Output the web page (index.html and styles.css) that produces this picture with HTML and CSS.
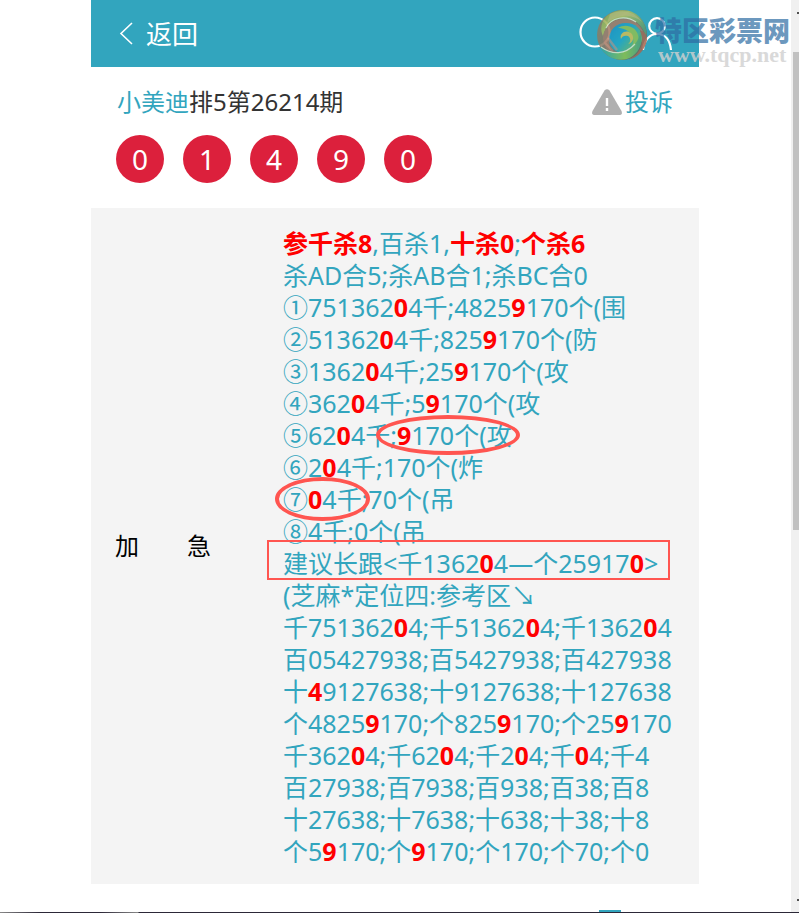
FILE: index.html
```html
<!DOCTYPE html>
<html lang="zh-CN">
<head>
<meta charset="utf-8">
<title>小美迪排5第26214期</title>
<link rel="stylesheet" href="styles.css">
</head>
<body>
<div class="viewport">
  <div class="page">
    <header class="topbar">
      <a class="back" href="#"><svg width="14" height="24" viewBox="0 0 14 24" fill="none" stroke="currentColor" stroke-width="1.6"><path d="M13 1 2 11.500 13 22"/></svg>返回</a>
      <nav class="tools">
        <a href="#" aria-label="搜索"><svg width="40" height="44" viewBox="0 0 40 44" fill="none" stroke="currentColor" stroke-width="2.200"><circle cx="18" cy="20" r="14.500"/><path d="M28 31l8 8"/></svg></a>
        <a href="#" aria-label="用户"><svg width="32" height="44" viewBox="0 0 32 44" fill="none" stroke="currentColor" stroke-width="2.200"><circle cx="16" cy="14" r="7.800"/><path d="M2 38c1-9 6-16 14-16s13 6 14 16"/></svg></a>
      </nav>
    </header>
    <main>
      <div class="heading">
        <h1><a href="#">小美迪</a>排5第26214期</h1>
        <a class="report" href="#"><svg width="30" height="26" viewBox="0 0 30 26"><path d="M12.500 1.500Q15-1 17.500 1.500L29.500 22Q31 26 27 26H3Q-1 26 .5 22Z" fill="#b0b0b0"/><path d="M15 9v8M15 19v3" stroke="#fff" stroke-width="2.400"/></svg>投诉</a>
      </div>
      <div class="balls"><span>0</span><span>1</span><span>4</span><span>9</span><span>0</span></div>
      <table class="plan">
        <tr>
          <th scope="row">加　　急</th>
          <td>
            <b>参千杀8</b>,百杀1,<b>十杀0</b>;<b>个杀6</b><br>
            杀AD合5;杀AB合1;杀BC合0<br>
            ①751362<b>0</b>4千;4825<b>9</b>170个(围<br>
            ②51362<b>0</b>4千;825<b>9</b>170个(防<br>
            ③1362<b>0</b>4千;25<b>9</b>170个(攻<br>
            ④362<b>0</b>4千;5<b>9</b>170个(攻<br>
            ⑤62<b>0</b>4千<span class="mark oval wide">;<b>9</b>170个(攻</span><br>
            ⑥2<b>0</b>4千;170个(炸<br>
            <span class="mark oval">⑦<b>0</b>4千</span>;70个(吊<br>
            ⑧4千;0个(吊<br>
            <span class="mark box">建议长跟&lt;千1362<b>0</b>4—个25917<b>0</b>&gt;</span><br>
            (芝麻*定位四:参考区↘<br>
            千751362<b>0</b>4;千51362<b>0</b>4;千1362<b>0</b>4<br>
            百05427938;百5427938;百427938<br>
            十<b>4</b>9127638;十9127638;十127638<br>
            个4825<b>9</b>170;个825<b>9</b>170;个25<b>9</b>170<br>
            千362<b>0</b>4;千62<b>0</b>4;千2<b>0</b>4;千<b>0</b>4;千4<br>
            百27938;百7938;百938;百38;百8<br>
            十27638;十7638;十638;十38;十8<br>
            个5<b>9</b>170;个<b>9</b>170;个170;个70;个0
          </td>
        </tr>
      </table>
      <div class="next"><i></i></div>
    </main>
  </div>
  <div class="watermark">
    <svg width="52" height="52" viewBox="0 0 52 52">
      <defs>
        <linearGradient id="rim" x1="0" y1="0" x2="1" y2="1"><stop offset="0" stop-color="#8b8464"/><stop offset=".5" stop-color="#8d7462"/><stop offset="1" stop-color="#5c5a50"/></linearGradient>
        <linearGradient id="band" x1="0" y1="0" x2="1" y2=".6"><stop offset="0" stop-color="#7f9c4c"/><stop offset=".45" stop-color="#b5bf5c"/><stop offset="1" stop-color="#5c9a70"/></linearGradient>
        <linearGradient id="swirl" x1="0" y1="0" x2="1" y2=".8"><stop offset="0" stop-color="#1b8fc6"/><stop offset=".5" stop-color="#22a6c4"/><stop offset="1" stop-color="#86bd45"/></linearGradient>
        <linearGradient id="base" x1="0" y1="0" x2="1" y2="0"><stop offset="0" stop-color="#2ba5ad"/><stop offset=".6" stop-color="#8cc04a"/><stop offset="1" stop-color="#4da27a"/></linearGradient>
      </defs>
      <circle cx="26" cy="26" r="25" fill="url(#rim)"/>
      <path d="M9 9C19-2 38-1 46 11c4 6 5 12 4 17C47 16 38 9 28 9 17 9 9 17 7 27 4 21 5 14 9 9Z" fill="url(#band)"/>
      <path d="M14 5C26-1 40 3 46 13 37 5 24 4 11 14" fill="#cbbd78" opacity=".6"/>
      <path d="M7 28C9 16 18 10 28 10c11 0 19 8 21 18-5-9-12-14-21-13-10 0-16 8-15 18 0 5 2 9 5 12C11 42 7 36 7 28Z" fill="#a67a64"/>
      <path d="M13 31c0-10 7-17 17-17 9 0 16 6 16 15 0 6-4 11-9 14-9 5-23 0-24-12Z" fill="url(#swirl)"/>
      <path d="M22 19c8-5 18-1 20 7 2 8-3 15-10 16 5-4 7-10 4-15-3-6-9-8-14-8Z" fill="#8fc052"/>
      <path d="M25 30c-2-6 5-10 10-6 4 4 2 10-3 11 3-2 3-6 0-8-3-1-6 0-7 3Z" fill="#d0bd55"/>
      <path d="M4 38c10 8 25 9 35-3 3-4 5-8 5-12 4 12-2 23-13 27C20 53 9 47 4 38Z" fill="url(#base)"/>
      <path d="M44 22c6 12-1 25-13 29 11-2 18-10 20-20 0-4-2-10-7-9Z" fill="#a5664f"/>
      <path d="M5 38c11 8 24 8 34-3M10 19C15 8 30 6 40 13" fill="none" stroke="#dce6c8" stroke-width="1.200"/>
      <path d="M12 29l9 12" stroke="#d0917d" stroke-width="2.500" opacity=".6"/>
    </svg>
    <div class="brand"><strong>特区彩票网</strong><span>www.tqcp.net</span></div>
  </div>
</div>
<div class="scroll"><i class="arrow"></i><div class="thumb"></div><i class="arrow down"></i></div>
</body>
</html>
```
FILE: styles.css
```css
* { box-sizing: border-box; }
body {
  margin: 0;
  height: 100vh;
  overflow: hidden;
  display: flex;
  background: #fff;
  color: #333;
  font: 24px/32px "Noto Sans", "Noto Sans CJK SC", sans-serif;
}
body::after {
  content: "";
  position: absolute;
  inset: auto 0 0;
  height: 1px;
  background: linear-gradient(90deg, #888, #2c2838 40px, #2c2838 100px, #888 138px, #2c2838 139px);
}
a { color: #32a5be; text-decoration: none; }
.viewport { position: relative; flex: 1; padding-right: 1px; overflow: hidden; }
.page { max-width: 608px; margin: 0 auto; }
.topbar {
  height: 67px;
  padding: 0 26px 0 28px;
  display: flex;
  align-items: center;
  justify-content: space-between;
  background: #32a5be;
}
.topbar a { color: #fff; }
.back { display: flex; align-items: center; gap: 13px; font-size: 26px; }
.tools { display: flex; gap: 24px; }
.tools svg { display: block; }
.heading {
  padding: 19px 26px 0;
  display: flex;
  justify-content: space-between;
}
h1 { margin: 0; font-size: 24px; font-weight: 400; }
.report { display: flex; align-items: center; gap: 3px; }
.balls { display: flex; gap: 19px; padding: 17px 25px 25px; }
.balls span {
  width: 48px;
  height: 48px;
  border-radius: 50%;
  background: #dc203c;
  color: #fff;
  font-size: 28px;
  line-height: 48px;
  text-align: center;
}
.plan { width: 100%; border-collapse: collapse; background: #f4f4f4; }
.plan th {
  padding: 0 24px;
  text-align: left;
  font-weight: 400;
  color: #000;
  white-space: nowrap;
}
.plan td {
  width: 416px;
  padding: 19px 0 17px;
  color: #32a5be;
  font-size: 25px;
  white-space: nowrap;
}
.plan b { color: #f00; }
.mark { position: relative; }
.mark::after { content: ""; position: absolute; border: 4px solid #ff5550; }
.oval::after { inset: -5px -8px; border-radius: 50%; }
.wide::after { inset: -3px -8px -3px -14px; }
.box::after { inset: -6px -12px 0 -16px; border-width: 2px; }
.next { padding: 26px 78px 0; display: flex; justify-content: flex-end; }
.next i { width: 22px; height: 22px; background: #32a5be; }
.watermark {
  position: absolute;
  top: 9px;
  right: 1px;
  display: flex;
  gap: 7px;
}
.watermark > svg { opacity: .85; }
.brand { display: flex; flex-direction: column; padding-top: 5px; }
.brand strong {
  color: #2f6da3;
  opacity: .7;
  font: 900 27px/32px "Noto Sans CJK SC", sans-serif;
}
.brand span {
  color: #d0d0d0;
  opacity: .8;
  font: bold 22px/18px "Liberation Serif", serif;
  padding-left: 3px;
}
.scroll {
  width: 8px;
  padding-left: 2px;
  background: #f0f0f0;
  display: flex;
  flex-direction: column;
}
.thumb { flex: 0 1 478px; background: #c1c1c1; }
.arrow { flex: 0 0 52px; padding: 12px 0 0 4px; }
.arrow::before { content: ""; display: block; height: 2px; background: #505050; }
.down { margin-top: auto; flex-basis: 26px; }
```
